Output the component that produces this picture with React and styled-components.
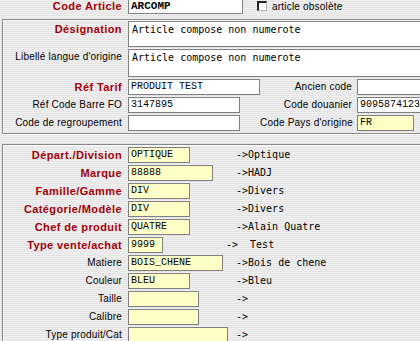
import React from "react";
import styled, { createGlobalStyle } from "styled-components";

const GlobalStyle = createGlobalStyle`
  html, body {
    margin: 0;
    padding: 0;
    overflow: hidden;
  }
  body {
    width: 420px;
    height: 341px;
    background: repeating-linear-gradient(
      to bottom,
      #f0f0f0 0,
      #f0f0f0 1px,
      #e4e4e4 1px,
      #e4e4e4 2px
    );
    font-family: "Liberation Sans", Arial, sans-serif;
  }
`;

const Page = styled.div`
  margin-top: -2px;
  width: 460px;
`;

const TopRow = styled.div`
  display: grid;
  grid-template-columns: 128px 115px auto;
  align-items: center;
  height: 16px;
`;

const Label = styled.div`
  padding-right: 6px;
  text-align: right;
  white-space: nowrap;
  height: 16px;
  line-height: 16px;
  font-family: "Liberation Sans", Arial, sans-serif;
  font-size: ${p => (p.$red ? "11px" : "10px")};
  font-weight: ${p => (p.$red ? "bold" : "normal")};
  letter-spacing: ${p => (p.$red ? "0.4px" : "0.2px")};
  color: ${p => (p.$red ? "#a00008" : "#000")};
`;

const SideLabel = styled(Label)`
  padding-right: 5px;
`;

const Field = styled.input`
  box-sizing: border-box;
  height: 16px;
  width: ${p => p.$w || 132}px;
  margin: 0;
  padding: 0 2px 1px;
  border: 1px solid #808080;
  border-radius: 0;
  outline: none;
  background: ${p => (p.$yellow ? "#ffffc8" : "#fff")};
  color: #000;
  line-height: 13px;
  font-family: "Liberation Mono", "DejaVu Sans Mono", monospace;
  font-size: ${p => (p.$bold ? "11px" : "10px")};
  font-weight: ${p => (p.$bold ? "bold" : "normal")};
`;

const Memo = styled.textarea`
  grid-column: 2 / -1;
  box-sizing: border-box;
  height: ${p => p.$h}px;
  margin: 0;
  padding: 2px 3px;
  border: 1px solid #808080;
  border-radius: 0;
  outline: none;
  resize: none;
  overflow: hidden;
  background: #fff;
  font-family: "DejaVu Sans Mono", "Liberation Mono", monospace;
  font-size: 10px;
  line-height: 12px;
`;

const Obsolete = styled.label`
  display: flex;
  align-items: center;
  gap: 5px;
  margin-left: 14px;
  font-family: "Liberation Sans", Arial, sans-serif;
  font-size: 10px;
  letter-spacing: 0.2px;
  color: #000;
`;

const Check = styled.span`
  box-sizing: border-box;
  width: 10px;
  height: 10px;
  background: #f8f8f8;
  border-top: 2px solid #222;
  border-left: 2px solid #222;
  border-right: 1px solid #bbb;
  border-bottom: 1px solid #bbb;
`;

const Group = styled.div`
  display: grid;
  row-gap: 2px;
  margin-left: 2px;
  width: 450px;
  border: 1px solid #868686;
  box-shadow: 1px 1px 0 #fff, inset 1px 1px 0 #fff;
`;

const IdentGroup = styled(Group)`
  margin-top: 5px;
  padding: 1px 0 2px;
  grid-template-columns: 125px 132px 97px 1fr;
  align-items: start;
`;

const FamilyGroup = styled(Group)`
  margin-top: 10px;
  padding: 2px 0 20px;
  grid-template-columns: 125px 108px 1fr;
  align-items: center;
`;

const Arrow = styled.div`
  margin-left: ${p => (p.$shift ? "-10px" : "0")};
  white-space: pre;
  height: 16px;
  line-height: 16px;
  font-family: "DejaVu Sans Mono", "Liberation Mono", monospace;
  font-size: 10px;
  color: #000;
`;

const codes = [
  { label: "Réf Tarif", red: true, value: "PRODUIT TEST", w: 132, side: "Ancien code", sideValue: "" },
  { label: "Réf Code Barre FO", value: "3147895", w: 112, side: "Code douanier", sideValue: "9095874123" },
  { label: "Code de regroupement", value: "", w: 112, side: "Code Pays d'origine", sideValue: "FR", sideW: 57, sideYellow: true }
];

const families = [
  { label: "Départ./Division", red: true, value: "OPTIQUE", w: 62, text: "->Optique" },
  { label: "Marque", red: true, value: "88888", w: 85, text: "->HADJ" },
  { label: "Famille/Gamme", red: true, value: "DIV", w: 62, text: "->Divers" },
  { label: "Catégorie/Modèle", red: true, value: "DIV", w: 62, text: "->Divers" },
  { label: "Chef de produit", red: true, value: "QUATRE", w: 62, text: "->Alain Quatre" },
  { label: "Type vente/achat", red: true, value: "9999", w: 35, text: "->  Test", shift: true },
  { label: "Matiere", value: "BOIS_CHENE", w: 95, text: "->Bois de chene" },
  { label: "Couleur", value: "BLEU", w: 62, text: "->Bleu" },
  { label: "Taille", value: "", w: 71, text: "->" },
  { label: "Calibre", value: "", w: 71, text: "->" },
  { label: "Type produit/Cat", value: "", w: 100, text: "->" }
];

const App = () => (
  <Page>
    <GlobalStyle />
    <TopRow>
      <Label $red>Code Article</Label>
      <Field $w={115} $bold readOnly defaultValue="ARCOMP" />
      <Obsolete>
        <Check />
        article obsolète
      </Obsolete>
    </TopRow>

    <IdentGroup>
      <Label $red>Désignation</Label>
      <Memo $h={26} readOnly defaultValue="Article compose non numerote" />
      <Label>Libellé langue d'origine</Label>
      <Memo $h={28} readOnly defaultValue="Article compose non numerote" />
      {codes.map(row => (
        <React.Fragment key={row.label}>
          <Label $red={row.red}>{row.label}</Label>
          <Field $w={row.w} readOnly defaultValue={row.value} />
          <SideLabel>{row.side}</SideLabel>
          <Field
            $w={row.sideW || 90}
            $yellow={row.sideYellow}
            readOnly
            defaultValue={row.sideValue}
          />
        </React.Fragment>
      ))}
    </IdentGroup>

    <FamilyGroup>
      {families.map(row => (
        <React.Fragment key={row.label}>
          <Label $red={row.red}>{row.label}</Label>
          <Field $w={row.w} $yellow readOnly defaultValue={row.value} />
          <Arrow $shift={row.shift}>{row.text}</Arrow>
        </React.Fragment>
      ))}
    </FamilyGroup>
  </Page>
);

export default App;
